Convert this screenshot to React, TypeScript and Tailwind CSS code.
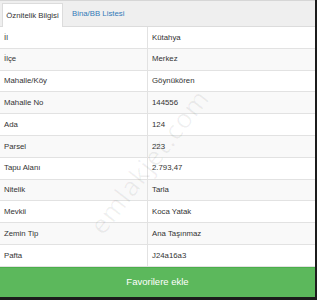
const rows: [string, string][] = [
  ['İl', 'Kütahya'],
  ['İlçe', 'Merkez'],
  ['Mahalle/Köy', 'Göynükören'],
  ['Mahalle No', '144556'],
  ['Ada', '124'],
  ['Parsel', '223'],
  ['Tapu Alanı', '2.793,47'],
  ['Nitelik', 'Tarla'],
  ['Mevkii', 'Koca Yatak'],
  ['Zemin Tip', 'Ana Taşınmaz'],
  ['Pafta', 'J24a16a3'],
];

export default function App() {
  return (
    <div className="relative flex h-[300px] w-[317px] overflow-hidden bg-[#1c1c1c] font-['Liberation_Sans',Arial,sans-serif] text-[7.8px] text-[#333]">
      <div className="mb-[3px] mr-[2px] flex flex-1 flex-col bg-white">
        {/* tabs */}
        <div className="flex h-[27px] items-end border-t border-[#d6d6d6] border-b border-b-[#dcdcdc] bg-[#efefef] pl-[2px]">
          <div className="-mb-px flex h-[24px] w-[61px] items-center justify-center border border-b-0 border-[#dcdcdc] bg-white">
            Öznitelik Bilgisi
          </div>
          <div className="flex h-[24px] items-center pl-[9px] text-[#337ab7]">Bina/BB Listesi</div>
        </div>

        {/* table */}
        <div className="flex flex-1 flex-col">
          {rows.map(([label, value], i) => (
            <div
              key={label}
              className={`flex h-[21.8px] border-b border-[#e2e2e2] ${i % 2 === 1 ? 'bg-[#f9f9f9]' : 'bg-white'}`}
            >
              <div className="flex w-[148px] items-center border-r border-[#e2e2e2] pl-[4px]">{label}</div>
              <div className="flex flex-1 items-center pl-[4px]">{value}</div>
            </div>
          ))}
        </div>

        {/* button */}
        <div className="flex h-[30px] items-center justify-center border-t border-[#4cae4c] bg-[#5cb85c] text-[9.5px] text-white">
          Favorilere ekle
        </div>
      </div>

      {/* watermark */}
      <div className="pointer-events-none absolute left-[62px] top-[142px] -rotate-[52deg] font-['Open_Sans',sans-serif] text-[26px] tracking-[1px] text-black/[0.06]">
        emlakjet.com
      </div>
    </div>
  );
}
